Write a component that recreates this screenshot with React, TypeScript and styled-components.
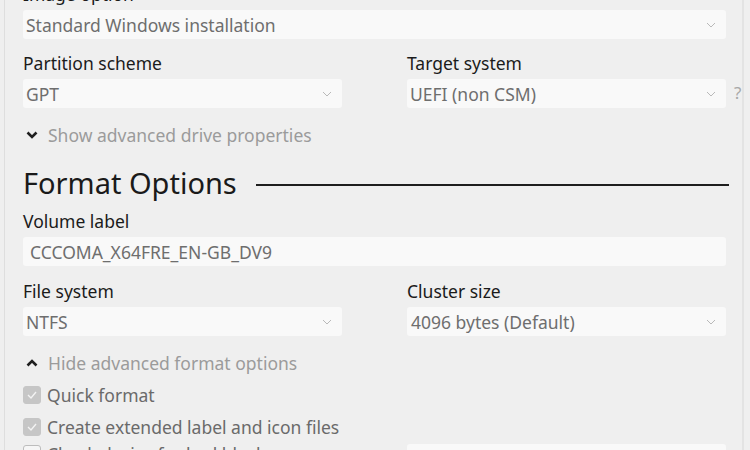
import styled, { createGlobalStyle } from 'styled-components'

const GlobalStyle = createGlobalStyle`
    html, body{
        margin: 0;
        padding: 0;
        background: #efefef;
    }
`

const Window = styled.div`
    width: 750px;
    height: 450px;
    overflow: hidden;
    background: #efefef;
    font-family: "Noto Sans", "Open Sans", sans-serif;
    box-sizing: border-box;
`

const Frame = styled.div`
    display: flow-root;
    margin: 0 6px 0 4px;
    height: 100%;
    border-left: 1px solid #dedede;
    border-right: 2px solid #e3e3e3;
    box-sizing: border-box;
`

const Content = styled.div`
    margin-top: -16px;
    padding-left: 18px;
    display: flex;
    flex-direction: column;
`

const Label = styled.div`
    font-size: 17.5px;
    line-height: 20px;
    color: #1b1b1b;
    margin-bottom: 6px;
    white-space: nowrap;
`

const Field = styled.div<{ $gap?: number }>`
    display: flex;
    flex-direction: column;
    margin-bottom: ${p => p.$gap ?? 14}px;
`

const Row = styled.div`
    display: grid;
    grid-template-columns: 319px 319px;
    column-gap: 65px;
`

const ControlLine = styled.div`
    display: flex;
    align-items: center;
`

const Select = styled.div<{ $width?: number; $pad?: number }>`
    width: ${p => p.$width ?? 319}px;
    height: 29px;
    background: #f9f9f9;
    border-radius: 3px;
    display: flex;
    align-items: center;
    justify-content: space-between;
    padding: 0 10px 0 ${p => p.$pad ?? 3}px;
    box-sizing: border-box;
    font-size: 17.5px;
    color: #6e6e6e;
    white-space: nowrap;
    flex-shrink: 0;
`

const Help = styled.span`
    margin-left: 8px;
    margin-top: -3px;
    font-size: 17px;
    color: #a8a8a8;
`

const Toggle = styled.div<{ $gap: number }>`
    display: flex;
    align-items: center;
    gap: 10px;
    height: 20px;
    padding-left: 3px;
    font-size: 17.5px;
    color: #9b9b9b;
    margin-bottom: ${p => p.$gap}px;
`

const Heading = styled.div`
    width: 706px;
    display: flex;
    align-items: center;
    height: 36px;
    margin-bottom: 11px;
`

const HeadingText = styled.span`
    font-size: 29px;
    color: #1a1a1a;
    white-space: nowrap;
`

const HeadingRule = styled.div`
    flex: 1;
    height: 2px;
    background: #1e1e1e;
    margin-left: 19px;
    margin-top: 6px;
`

const CheckRow = styled.div<{ $gap?: number }>`
    display: flex;
    align-items: center;
    gap: 6px;
    height: 20px;
    margin-bottom: ${p => p.$gap ?? 12}px;
    font-size: 17.5px;
    color: #6a6a6a;
    white-space: nowrap;
`

const Box = styled.div<{ $checked: boolean }>`
    width: 18px;
    height: 18px;
    border-radius: 3px;
    background: ${p => (p.$checked ? '#c6c6c6' : '#f6f6f6')};
    border: 1px solid ${p => (p.$checked ? '#c6c6c6' : '#bdbdbd')};
    box-sizing: border-box;
    display: flex;
    align-items: center;
    justify-content: center;
    flex-shrink: 0;
`

const LastRow = styled.div`
    display: grid;
    grid-template-columns: 319px 319px;
    column-gap: 65px;
    align-items: start;
`

const Caret = () => (
    <svg width="10" height="6" viewBox="0 0 10 6">
        <polyline points="1,1 5,5 9,1" fill="none" stroke="#b9b9b9" strokeWidth="1" />
    </svg>
)

const Chevron = ({ up }: { up?: boolean }) => (
    <svg width="12" height="8" viewBox="0 0 12 8">
        <polyline
            points={up ? '1.5,6.5 6,2 10.5,6.5' : '1.5,1.5 6,6 10.5,1.5'}
            fill="none"
            stroke="#1f1f1f"
            strokeWidth="2.6"
            strokeLinejoin="miter"
        />
    </svg>
)

const Check = () => (
    <svg width="12" height="10" viewBox="0 0 12 10">
        <polyline points="2,5 5,8 10,2" fill="none" stroke="#f3f3f3" strokeWidth="1.4" />
    </svg>
)

const App = () => {
    return (
        <>
            <GlobalStyle />
            <Window>
                <Frame>
                    <Content>
                        <Field>
                            <Label>Image option</Label>
                            <Select $width={703}>
                                Standard Windows installation
                                <Caret />
                            </Select>
                        </Field>

                        <Row>
                            <Field $gap={17}>
                                <Label>Partition scheme</Label>
                                <Select>
                                    GPT
                                    <Caret />
                                </Select>
                            </Field>
                            <Field $gap={17}>
                                <Label>Target system</Label>
                                <ControlLine>
                                    <Select>
                                        UEFI (non CSM)
                                        <Caret />
                                    </Select>
                                    <Help>?</Help>
                                </ControlLine>
                            </Field>
                        </Row>

                        <Toggle $gap={19}>
                            <Chevron />
                            Show advanced drive properties
                        </Toggle>

                        <Heading>
                            <HeadingText>Format Options</HeadingText>
                            <HeadingRule />
                        </Heading>

                        <Field $gap={15}>
                            <Label>Volume label</Label>
                            <Select $width={703} $pad={7}>
                                CCCOMA_X64FRE_EN-GB_DV9
                            </Select>
                        </Field>

                        <Row>
                            <Field $gap={17}>
                                <Label>File system</Label>
                                <Select>
                                    NTFS
                                    <Caret />
                                </Select>
                            </Field>
                            <Field $gap={17}>
                                <Label>Cluster size</Label>
                                <Select $pad={4}>
                                    4096 bytes (Default)
                                    <Caret />
                                </Select>
                            </Field>
                        </Row>

                        <Toggle $gap={12}>
                            <Chevron up />
                            Hide advanced format options
                        </Toggle>

                        <CheckRow>
                            <Box $checked>
                                <Check />
                            </Box>
                            Quick format
                        </CheckRow>
                        <CheckRow $gap={7}>
                            <Box $checked>
                                <Check />
                            </Box>
                            Create extended label and icon files
                        </CheckRow>

                        <LastRow>
                            <CheckRow>
                                <Box $checked={false} />
                                Check device for bad blocks
                            </CheckRow>
                            <Select>
                                1 pass
                                <Caret />
                            </Select>
                        </LastRow>
                    </Content>
                </Frame>
            </Window>
        </>
    )
}

export default App
